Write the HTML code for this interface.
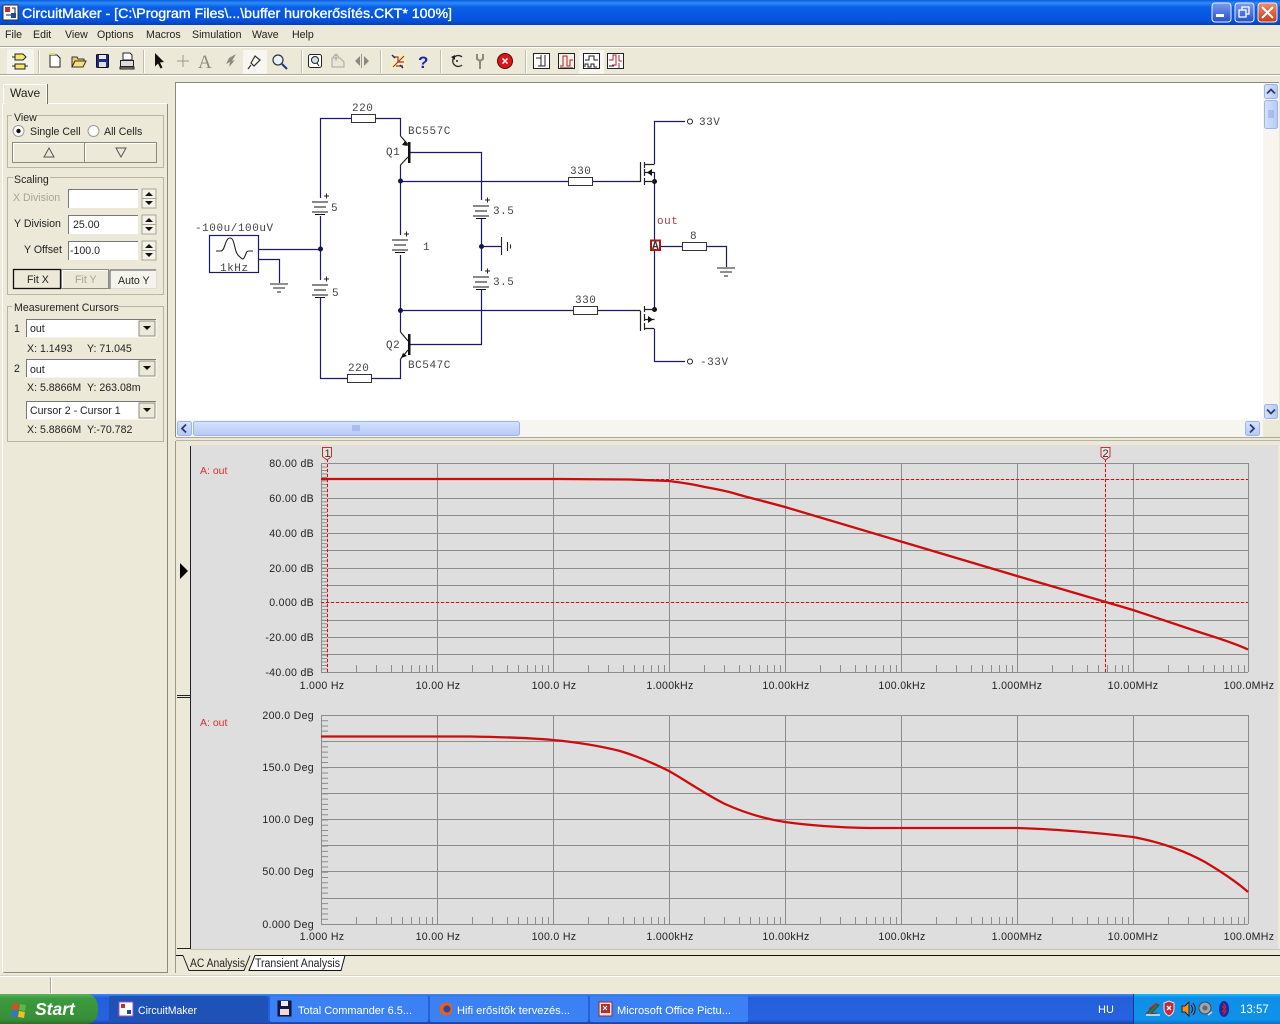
<!DOCTYPE html>
<html><head><meta charset="utf-8"><style>
html,body{margin:0;padding:0;background:#ece9d8;overflow:hidden}
svg{display:block;position:absolute;left:0;top:0}
text{font-family:"Liberation Sans",sans-serif;font-size:10.6px;fill:#222}
.m{font-family:"Liberation Mono",monospace;font-size:11px;fill:#444;letter-spacing:.55px}
.g{fill:#333;font-size:10px;letter-spacing:.3px}
.w{fill:none;stroke:#1a1a66;stroke-width:1.2}
.b{fill:none;stroke:#222;stroke-width:1.2}
.r{fill:#fff;stroke:#333;stroke-width:1}
.gr{stroke:#8c8c8c;stroke-width:1;fill:none}
</style></head><body>
<svg width="1280" height="1024" viewBox="0 0 1280 1024" xmlns="http://www.w3.org/2000/svg">
<defs>
<linearGradient id="tb" x1="0" y1="0" x2="0" y2="1"><stop offset="0" stop-color="#0a5be0"/><stop offset=".12" stop-color="#2f8bf5"/><stop offset=".28" stop-color="#0a60e8"/><stop offset=".8" stop-color="#0553dc"/><stop offset="1" stop-color="#0340b8"/></linearGradient>
<linearGradient id="bb" x1="0" y1="0" x2="0" y2="1"><stop offset="0" stop-color="#7a9cf0"/><stop offset="1" stop-color="#2850c8"/></linearGradient>
<linearGradient id="rb" x1="0" y1="0" x2="0" y2="1"><stop offset="0" stop-color="#e89070"/><stop offset="1" stop-color="#c83a18"/></linearGradient>
<linearGradient id="task" x1="0" y1="0" x2="0" y2="1"><stop offset="0" stop-color="#3f8cf3"/><stop offset=".12" stop-color="#245edb"/><stop offset=".85" stop-color="#2663e0"/><stop offset="1" stop-color="#1941a5"/></linearGradient>
<linearGradient id="tray" x1="0" y1="0" x2="0" y2="1"><stop offset="0" stop-color="#18bbff"/><stop offset=".12" stop-color="#0f8fe8"/><stop offset=".85" stop-color="#0f91ea"/><stop offset="1" stop-color="#0b6fc8"/></linearGradient>
<linearGradient id="st" x1="0" y1="0" x2="0" y2="1"><stop offset="0" stop-color="#5db35d"/><stop offset=".15" stop-color="#3c9a3c"/><stop offset=".85" stop-color="#388e38"/><stop offset="1" stop-color="#2a6f2a"/></linearGradient>
<linearGradient id="sb" x1="0" y1="0" x2="1" y2="0"><stop offset="0" stop-color="#d6e2fc"/><stop offset="1" stop-color="#b6c9f6"/></linearGradient>
<linearGradient id="sbh" x1="0" y1="0" x2="0" y2="1"><stop offset="0" stop-color="#d6e2fc"/><stop offset="1" stop-color="#b6c9f6"/></linearGradient>
<path id="tk" d="M35.500 672v-7M55.500 672v-7M70.500 672v-7M81.500 672v-7M90.500 672v-7M98.500 672v-7M105.500 672v-7M111.500 672v-7" stroke="#8c8c8c" fill="none"/>
<g id="bat"><path d="M-8 0h16M-6 5h12M-8 10h16M-5 12.500h10" stroke="#111" fill="none" stroke-width="1.100"/><path d="M4 -6h5M6.500 -8.500v5" stroke="#222" fill="none"/></g>
<path id="gnd" d="M-9 0h18M-6 4h12M-2 8h4" stroke="#222" fill="none" stroke-width="1.100"/>
</defs>

<rect width="1280" height="1024" fill="#ece9d8"/>

<!-- title -->
<rect width="1280" height="25" fill="url(#tb)"/>
<rect x="3" y="5" width="15" height="15" fill="#fff" stroke="#333"/>
<rect x="5" y="7" width="5" height="5" fill="#c03030"/><rect x="11" y="13" width="5" height="5" fill="#1a4aa0"/><path d="M6 15h5M12 8h3v5" stroke="#222" fill="none"/>
<text x="22" y="18" style="font-size:13.500px;fill:#fff;stroke:#fff;stroke-width:.35" textLength="430" lengthAdjust="spacingAndGlyphs">CircuitMaker - [C:\Program Files\...\buffer hurokerősítés.CKT* 100%]</text>
<rect x="1212" y="3" width="19" height="19" rx="3" fill="url(#bb)" stroke="#e8eeff"/><rect x="1216" y="14" width="8" height="3" fill="#fff"/>
<rect x="1235" y="3" width="19" height="19" rx="3" fill="url(#bb)" stroke="#e8eeff"/><path d="M1239 10h7v7h-7zM1242 10v-3h7v7h-3" fill="none" stroke="#fff" stroke-width="1.300"/>
<rect x="1258" y="3" width="19" height="19" rx="3" fill="url(#rb)" stroke="#f4e8e0"/><path d="M1262 7l11 11M1273 7l-11 11" stroke="#fff" stroke-width="2"/>

<!-- menu -->
<g>
<text x="5" y="38">File</text><text x="33" y="38">Edit</text><text x="65" y="38">View</text><text x="97" y="38">Options</text><text x="146" y="38">Macros</text><text x="192" y="38">Simulation</text><text x="252" y="38">Wave</text><text x="292" y="38">Help</text>
</g>
<path d="M0 46.500h1280" stroke="#aca899"/><path d="M0 47.500h1280" stroke="#fff"/>
<path d="M0 74.500h1280" stroke="#aca899"/><path d="M0 75.500h1280" stroke="#fff"/>

<!-- toolbar -->
<rect x="7" y="49" width="27" height="25" fill="#f5f4ec"/>
<path d="M15 54h8l3 3-3 3h-8zM15 64h10v5H15z" fill="#f6e96a" stroke="#222"/><path d="M12 57h3M12 66h3M25 66h3" stroke="#222"/>
<path d="M38.500 50v23M143.500 50v23M301.500 50v23M380.500 50v23M440.500 50v23M525.500 50v23" stroke="#c0bdaa" fill="none"/>
<path d="M39.500 50v23M144.500 50v23M302.500 50v23M381.500 50v23M441.500 50v23M526.500 50v23" stroke="#fff" fill="none"/>
<path d="M50 55h7l3 3v9H50z" fill="#fff" stroke="#222"/><path d="M50 54h5" stroke="#e8d850" stroke-width="2"/>
<path d="M72 57h5l1 2h6v2h-9l-3 6z" fill="#f0d060" stroke="#333"/><path d="M75 61h11l-3 6H72z" fill="#f8e080" stroke="#333"/>
<rect x="96.500" y="54.500" width="12" height="13" rx="1" fill="#1c2e8c" stroke="#111"/><rect x="99" y="55" width="7" height="4" fill="#e8e8f0"/><rect x="99" y="62" width="7" height="5" fill="#dfdfdf"/>
<path d="M123 53h7l2 2v5h-9z" fill="#fff" stroke="#222"/><rect x="120.500" y="60.500" width="13" height="6" fill="#ddd" stroke="#222"/><path d="M120 67h14v2h-14z" fill="#999" stroke="#222"/>
<path d="M155 53l9 9-4 .5 2.500 5-2 1-2.500-5-3 3z" fill="#111"/>
<path d="M183 55v12M177 61h12" stroke="#aaa89a" stroke-width="1.200"/>
<text x="198" y="68" style="font-family:'Liberation Serif',serif;font-size:19px;fill:#8c8a7c">A</text>
<path d="M236 54l-7 4-3 6 4-2-1 5 6-7-3 1z" fill="#8c8a7c"/>
<rect x="243" y="50" width="24" height="24" fill="#f7f6f0"/>
<path d="M255 56l5 4-6 6-3-3zM251 65l-3 4" fill="none" stroke="#333" stroke-width="1.200"/>
<circle cx="278" cy="60" r="5" fill="#e8f0f8" stroke="#333" stroke-width="1.200"/><path d="M282 64l5 5" stroke="#1c3a8c" stroke-width="2"/>
<rect x="308.500" y="54.500" width="13" height="13" rx="2" fill="#fff" stroke="#222"/><circle cx="315" cy="60" r="3.500" fill="#cfe0e8" stroke="#222"/><path d="M317 63l2 3" stroke="#222"/>
<path d="M332 58h8l4 4v5h-12z" fill="#e8e6d8" stroke="#aaa89a"/><path d="M336 54v7M333 57l3-3 3 3" fill="none" stroke="#aaa89a"/>
<path d="M361.500 54v14" stroke="#999"/><path d="M360 56l-5 5 5 5zM364 56l5 5-5 5z" fill="#8c8a7c"/>
<rect x="391" y="54" width="15" height="15" fill="#f4efc0"/><path d="M393 67l11-11M393 57h5v5h6M396 66h7" stroke="#b03030" fill="none" stroke-width="1.200"/><path d="M392 55l3 3M403 68l-3-3" stroke="#1a2a8c" stroke-width="1.500"/>
<text x="418" y="68" style="font-size:17px;font-weight:bold;fill:#1c2ab0">?</text>
<path d="M462 57a5.500 5.500 0 1 0 0 8" fill="none" stroke="#222" stroke-width="1.200"/><path d="M451 57l4-2v5z" fill="#222"/><circle cx="457" cy="61" r="1" fill="#222"/>
<path d="M477 54v5l3 2 3-2v-5M480 61v8" stroke="#8c8a7c" stroke-width="2" fill="none"/>
<circle cx="505" cy="61" r="7.500" fill="#d81818" stroke="#600"/><path d="M502.500 58.500l5 5M507.500 58.500l-5 5" stroke="#fff" stroke-width="1.500"/>
<g fill="none" stroke="#222">
<rect x="533.500" y="53.500" width="16" height="15" fill="#fff"/><path d="M536 58h5v-3M541 58v8M545 55v11h-7"/>
<rect x="558.500" y="53.500" width="16" height="15" fill="#f4f2e8"/><path d="M560 66h3v-10h4v10h3v-6h3" stroke="#b82020"/><path d="M560 68h13"/>
<rect x="579" y="50" width="25" height="24" fill="#f7f6f0" stroke="none"/>
<rect x="583.500" y="53.500" width="16" height="15" fill="#fff"/><path d="M585 60h4v-4h5v4h4M585 67v-3h3v3h3v-3h3v3h3"/>
<rect x="607.500" y="53.500" width="16" height="15" fill="#fff"/><path d="M609 60h4v-5h3v10h-4M619 55v6h3M619 63v5" stroke="#b82020"/><path d="M609 66h5"/>
</g>

<!-- left panel -->
<path d="M167.500 104V972.500H3.500" stroke="#8c8a78" fill="none"/>
<path d="M2.500 972V103.500H5" stroke="#fff" fill="none"/>
<path d="M47.500 103.500H167" stroke="#fff"/><path d="M3.500 103V84.500H46.500V103" fill="none" stroke="#fff"/><path d="M47.500 84v20" stroke="#716f64"/>
<text x="10" y="97" style="font-size:12px">Wave</text>

<g fill="none">
<path d="M12 115.500H7.500V167.500H163.500V115.500H37" stroke="#b8b5a4"/>
<path d="M13 177.500H7.500V294.500H163.500V177.500H50" stroke="#b8b5a4"/>
<path d="M12 306.500H7.500V441.500H163.500V306.500H118" stroke="#b8b5a4"/>
</g>
<text x="14" y="121">View</text>
<circle cx="18.500" cy="131" r="5.500" fill="#fff" stroke="#999"/><circle cx="18.500" cy="131" r="2.200" fill="#111"/>
<text x="30" y="135">Single Cell</text>
<circle cx="93.500" cy="131" r="5.500" fill="#fff" stroke="#999"/>
<text x="104" y="135">All Cells</text>
<g>
<rect x="12.500" y="142.500" width="72" height="20" fill="#ece9d8" stroke="#8c8a78"/><path d="M13 143.500h71M13.500 144v18" stroke="#fff" fill="none"/>
<rect x="84.500" y="142.500" width="72" height="20" fill="#ece9d8" stroke="#8c8a78"/><path d="M85 143.500h71M85.500 144v18" stroke="#fff" fill="none"/>
<path d="M44 157l5-9 5 9z" fill="none" stroke="#555"/><path d="M116 148l5 9 5-9z" fill="none" stroke="#555"/>
</g>
<text x="14" y="183">Scaling</text>
<text x="13" y="201" style="fill:#a7a594">X Division</text>
<text x="14" y="227">Y Division</text>
<text x="24" y="253">Y Offset</text>
<g fill="#fff">
<rect x="68" y="189" width="70" height="19"/><rect x="68" y="215" width="70" height="19"/><rect x="68" y="241" width="70" height="19"/>
<path d="M68.500 208V189.500H138M68.500 234V215.500H138M68.500 260V241.500H138" fill="none" stroke="#777"/>
</g>
<text x="73" y="228">25.00</text><text x="70" y="254">-100.0</text>
<g>
<rect x="142" y="189" width="14" height="19" fill="#f4f2e8" stroke="#a8a594"/><rect x="142" y="215" width="14" height="19" fill="#f4f2e8" stroke="#a8a594"/><rect x="142" y="241" width="14" height="19" fill="#f4f2e8" stroke="#a8a594"/>
<path d="M145 196l4-4 4 4zM145 201l4 4 4-4zM145 222l4-4 4 4zM145 227l4 4 4-4zM145 248l4-4 4 4zM145 253l4 4 4-4z" fill="#111"/>
<path d="M142 198.500h14M142 224.500h14M142 250.500h14" stroke="#a8a594"/>
</g>
<rect x="13.500" y="269.500" width="47" height="19" fill="#ece9d8" stroke="#111" stroke-width="1.300"/>
<rect x="61.500" y="269.500" width="47" height="19" fill="#ece9d8" stroke="#8c8a78"/><path d="M62 270.500h46M62.500 271v17" stroke="#fff" fill="none"/>
<rect x="109.500" y="269.500" width="47" height="19" fill="#f5f4ec" stroke="#ddd"/><path d="M110 270h46M110 270v19" stroke="#555" fill="none"/>
<text x="27" y="283">Fit X</text><text x="75" y="283" style="fill:#a7a594">Fit Y</text><text x="118" y="284">Auto Y</text>

<text x="14" y="311">Measurement Cursors</text>
<text x="14" y="332">1</text><text x="14" y="372">2</text>
<g>
<rect x="26.500" y="319.500" width="130" height="18" fill="#fff"/><path d="M26.500 337V319.500H156" stroke="#777" fill="none"/>
<rect x="26.500" y="359.500" width="130" height="18" fill="#fff"/><path d="M26.500 377V359.500H156" stroke="#777" fill="none"/>
<rect x="26.500" y="401.500" width="130" height="18" fill="#fff"/><path d="M26.500 419V401.500H156" stroke="#777" fill="none"/>
<rect x="139" y="321" width="16" height="15" fill="#ece9d8" stroke="#8c8a78"/><rect x="139" y="361" width="16" height="15" fill="#ece9d8" stroke="#8c8a78"/><rect x="139" y="403" width="16" height="15" fill="#ece9d8" stroke="#8c8a78"/>
<path d="M143 326h8l-4 4zM143 366h8l-4 4zM143 408h8l-4 4z" fill="#111"/>
</g>
<text x="30" y="332">out</text><text x="30" y="373">out</text><text x="30" y="414">Cursor 2 - Cursor 1</text>
<text x="27" y="352">X: 1.1493</text><text x="87" y="352">Y: 71.045</text>
<text x="27" y="391">X: 5.8866M</text><text x="87" y="391">Y: 263.08m</text>
<text x="27" y="433">X: 5.8866M</text><text x="87" y="433">Y:-70.782</text>

<!-- schematic canvas -->
<path d="M175.500 437V82.500H1279" stroke="#8c8a78" fill="none"/>
<rect x="176" y="83" width="1087" height="337" fill="#fff"/>
<rect x="1263" y="83" width="16" height="337" fill="#f6f5ef"/>
<rect x="176" y="420" width="1087" height="17" fill="#f6f5ef"/>
<path d="M176 437.500H1280" stroke="#aca899"/><path d="M176 440.500H1280" stroke="#b8b5a4"/>
<rect x="1264.500" y="84.500" width="13" height="14" rx="2" fill="url(#sb)" stroke="#9db4ea"/><path d="M1267 93.500l4-4 4 4" fill="none" stroke="#2a3a78" stroke-width="1.800"/>
<rect x="1264.500" y="100.500" width="13" height="28" rx="2" fill="url(#sb)" stroke="#9db4ea"/><path d="M1268 111h6M1268 113h6M1268 115h6M1268 117h6" stroke="#8ea4dc"/>
<rect x="1264.500" y="404.500" width="13" height="14" rx="2" fill="url(#sb)" stroke="#9db4ea"/><path d="M1267 409.500l4 4 4-4" fill="none" stroke="#2a3a78" stroke-width="1.800"/>
<rect x="177.500" y="421.500" width="14" height="14" rx="2" fill="url(#sbh)" stroke="#9db4ea"/><path d="M186 424.500l-4 4 4 4" fill="none" stroke="#2a3a78" stroke-width="1.800"/>
<rect x="193.500" y="421.500" width="326" height="14" rx="2" fill="url(#sbh)" stroke="#9db4ea"/><path d="M353 425v6M355 425v6M357 425v6M359 425v6" stroke="#8ea4dc"/>
<rect x="1245.500" y="421.500" width="14" height="14" rx="2" fill="url(#sbh)" stroke="#9db4ea"/><path d="M1250 424.500l4 4-4 4" fill="none" stroke="#2a3a78" stroke-width="1.800"/>

<!-- wires -->
<g class="w">
<path d="M351 118.500H320.500V198M320.500 216V280M320.500 298V378.500H347M372 378.500H400.500V359"/>
<path d="M376 118.500H400.500V136"/>
<path d="M400.500 165V235M400.500 255V332"/>
<path d="M410 152.500H481.500V200M481.500 219V271M481.500 290V344.500H410"/>
<path d="M400.500 181.500H568M593 181.500H631M400.500 310.500H573M598 310.500H631"/>
<path d="M654.500 164V121.500H685M654.500 172V308M654.500 329V361.500H685"/>
<path d="M661 246.500H682M707 246.500H726.500V267"/>
<path d="M259 249.500H320.500M259 259.500H279.500V283M481.500 246.500H501"/>
</g>
<g fill="#14144e">
<circle cx="320.500" cy="249" r="2.500"/><circle cx="400.500" cy="181" r="2.500"/><circle cx="400.500" cy="310.500" r="2.500"/><circle cx="481.500" cy="246.500" r="2.500"/>
</g>
<circle cx="654.500" cy="181.500" r="2.500" fill="#111"/><circle cx="654.500" cy="309.500" r="2.500" fill="#111"/>

<!-- resistors -->
<rect class="r" x="351.500" y="114.500" width="24" height="8"/>
<rect class="r" x="347.500" y="374.500" width="24" height="8"/>
<rect class="r" x="568.500" y="177.500" width="24" height="8"/>
<rect class="r" x="573.500" y="306.500" width="24" height="8"/>
<rect class="r" x="682.500" y="242.500" width="24" height="8"/>

<use href="#bat" x="320" y="202"/><use href="#bat" x="320" y="285"/><use href="#bat" x="400" y="240"/><use href="#bat" x="481" y="206"/><use href="#bat" x="481" y="277"/>

<use href="#gnd" x="279" y="284"/><use href="#gnd" x="726" y="268"/>
<path d="M501.500 237v18M507.500 242v9M510.500 244.500v4" stroke="#222" fill="none" stroke-width="1.100"/>

<!-- transistors -->
<rect x="408" y="142" width="2.500" height="21" fill="#111"/>
<rect x="408" y="334" width="2.500" height="21" fill="#111"/>
<path d="M400.500 136l8 9M408 157l-7.500 8M408 341l-7.500-9M408 350l-7.500 9" class="b"/>
<path d="M408 146l-6-1 3-4zM401 358l2-5 4 3z" fill="#111"/>

<!-- mosfets -->
<g class="b">
<path d="M631 181.500H640.500M640.500 162v20M644.500 162v6M644.500 169v7M644.500 178v7M645 164.500H654.500M645 172.500H654.500M645 181.500H654.500"/>
<path d="M631 310.500H640.500M640.500 311v20M644.500 306v6M644.500 314v7M644.500 323v7M645 309.500H654.500M645 319.500H654.500M645 328.500H654.500"/>
</g>
<path d="M647 172.500l5-3.500v7zM653 319.500l-5-3.500v7z" fill="#111"/>
<circle cx="690" cy="121.500" r="2.500" fill="#fff" stroke="#222"/><circle cx="690" cy="361.500" r="2.500" fill="#fff" stroke="#222"/>

<!-- source -->
<rect x="209.500" y="235.500" width="49" height="37" fill="#fff" stroke="#1a1a66" stroke-width="1.200"/>
<path d="M216 251h5c4 0 4-13 9-13s4 13 8 17 5 6 7 1 2-5 4-5h4" fill="none" stroke="#222" stroke-width="1.100"/>

<!-- probe -->
<rect x="651" y="240.500" width="9" height="9.500" fill="#fff" stroke="#b01818" stroke-width="2"/>
<text x="652" y="249" style="font-family:'Liberation Mono',monospace;font-size:11px;font-weight:bold;fill:#333">A</text>

<!-- schematic labels -->
<text class="m" x="352" y="111">220</text>
<text class="m" x="408" y="134">BC557C</text>
<text class="m" x="386" y="155">Q1</text>
<text class="m" x="386" y="348">Q2</text>
<text class="m" x="408" y="368">BC547C</text>
<text class="m" x="348" y="371">220</text>
<text class="m" x="331" y="211">5</text>
<text class="m" x="332" y="296">5</text>
<text class="m" x="423" y="250">1</text>
<text class="m" x="195" y="231">-100u/100uV</text>
<text class="m" x="220" y="271">1kHz</text>
<text class="m" x="493" y="214">3.5</text>
<text class="m" x="493" y="285">3.5</text>
<text class="m" x="570" y="174">330</text>
<text class="m" x="575" y="303">330</text>
<text class="m" x="699" y="125">33V</text>
<text class="m" x="700" y="365">-33V</text>
<text class="m" x="657" y="224" style="fill:#a04040">out</text>
<text class="m" x="690" y="239">8</text>

<!-- wave area -->
<path d="M175.500 441V973" stroke="#9c9a8a"/>
<rect x="178" y="445" width="1100" height="504" fill="#dedede"/>
<rect x="178" y="445" width="12" height="504" fill="#ece9d8"/>
<path d="M190.500 446V948.500H177M177 695.500h14M177 697.500h14" stroke="#222" fill="none"/>
<path d="M180 563v16l8-8z" fill="#000"/>
<path d="M190 949.500H1280" stroke="#c8c5b4"/>

<!-- grid top -->
<g class="gr">
<path d="M321 463.500H1248M321 479.500H1248M321 498.500H1248M321 515.500H1248M321 533.500H1248M321 550.500H1248M321 568.500H1248M321 585.500H1248M321 620.500H1248M321 637.500H1248M321 654.500H1248M321 672.500H1248"/>
<path d="M321.500 463V672M437.500 463V672M553.500 463V672M669.500 463V672M785.500 463V672M901.500 463V672M1017.500 463V672M1133.500 463V672M1248.500 463V672"/>
<path d="M324.500 463V672" stroke-width="7" stroke-dasharray="1 2.483"/>
</g>
<use href="#tk" x="321"/><use href="#tk" x="437"/><use href="#tk" x="553"/><use href="#tk" x="669"/><use href="#tk" x="785"/><use href="#tk" x="901"/><use href="#tk" x="1017"/><use href="#tk" x="1133"/>

<!-- grid bottom -->
<g class="gr">
<path d="M321 715.500H1248M321 741.500H1248M321 767.500H1248M321 793.500H1248M321 819.500H1248M321 845.500H1248M321 871.500H1248M321 898.500H1248M321 924.500H1248"/>
<path d="M321.500 715V924M437.500 715V924M553.500 715V924M669.500 715V924M785.500 715V924M901.500 715V924M1017.500 715V924M1133.500 715V924M1248.500 715V924"/>
<path d="M324.500 715V924" stroke-width="7" stroke-dasharray="1 4.225"/>
</g>
<use href="#tk" x="321" y="252"/><use href="#tk" x="437" y="252"/><use href="#tk" x="553" y="252"/><use href="#tk" x="669" y="252"/><use href="#tk" x="785" y="252"/><use href="#tk" x="901" y="252"/><use href="#tk" x="1017" y="252"/><use href="#tk" x="1133" y="252"/>

<!-- cursors -->
<path d="M327.500 459V672M1105.500 459V672M321 479.500H1248M321 602.500H1248" fill="none" stroke="#eab4b4"/>
<path d="M327.500 459V672M1105.500 459V672M321 479.500H1248M321 602.500H1248" fill="none" stroke="#d01010" stroke-dasharray="3 2"/>
<path d="M322.500 447.500h9v9l-4.500 3.500-4.500-3.500z" fill="#e8e4e0" stroke="#c03030"/>
<path d="M1101 447.500h9v9l-4.500 3.500-4.500-3.500z" fill="#e8e4e0" stroke="#c03030"/>
<text x="324.500" y="457" style="font-size:11px;fill:#333">1</text>
<text x="1102.500" y="457" style="font-size:11px;fill:#333">2</text>

<!-- curves -->
<path d="M321 479H560L630 479.500 669 481C680 482.500 690 483.500 700 486 712 488.500 722 490 733 493 750 498 765 501.500 785 507L901 541.500 1017 576 1133 610 1190 629C1210 636 1230 641 1248 649.500" fill="none" stroke="#cc0d0d" stroke-width="2.300"/>
<path d="M321 736.500H470C500 737 530 738 553 740 580 742.500 600 746 620 751 640 757 655 764 669 771 685 780 705 794 725 804 745 813 765 819 785 822 810 825.500 840 827.500 870 828L1017 828C1050 829 1090 832 1133 837 1160 842 1185 851 1205 862 1225 874 1238 883 1248 892" fill="none" stroke="#cc0d0d" stroke-width="2.300"/>

<text x="200" y="474" style="font-size:10.500px;fill:#d83030">A: out</text>
<text x="200" y="726" style="font-size:10.500px;fill:#d83030">A: out</text>

<!-- y labels -->
<g class="g" text-anchor="end">
<text x="314" y="467">80.00 dB</text><text x="314" y="502">60.00 dB</text><text x="314" y="537">40.00 dB</text><text x="314" y="572">20.00 dB</text><text x="314" y="606">0.000 dB</text><text x="314" y="641">-20.00 dB</text><text x="314" y="676">-40.00 dB</text>
<text x="314" y="719">200.0 Deg</text><text x="314" y="771">150.0 Deg</text><text x="314" y="823">100.0 Deg</text><text x="314" y="875">50.00 Deg</text><text x="314" y="928">0.000 Deg</text>
</g>
<g class="g" text-anchor="middle">
<text x="322" y="689">1.000 Hz</text><text x="438" y="689">10.00 Hz</text><text x="554" y="689">100.0 Hz</text><text x="670" y="689">1.000kHz</text><text x="786" y="689">10.00kHz</text><text x="902" y="689">100.0kHz</text><text x="1017" y="689">1.000MHz</text><text x="1133" y="689">10.00MHz</text><text x="1249" y="689">100.0MHz</text>
<text x="322" y="940">1.000 Hz</text><text x="438" y="940">10.00 Hz</text><text x="554" y="940">100.0 Hz</text><text x="670" y="940">1.000kHz</text><text x="786" y="940">10.00kHz</text><text x="902" y="940">100.0kHz</text><text x="1017" y="940">1.000MHz</text><text x="1133" y="940">10.00MHz</text><text x="1249" y="940">100.0MHz</text>
</g>

<!-- bottom tabs -->
<path d="M176 955.500H183" stroke="#111"/>
<path d="M255 955.500H1280" stroke="#111"/>
<path d="M183 955.500l6 15h55l6-15" fill="#ece9d8" stroke="#222"/>
<path d="M255 955.500h90l-4 15h-92z" fill="#fff" stroke="#111"/>
<text x="190" y="967" style="font-size:11.500px" textLength="55" lengthAdjust="spacingAndGlyphs">AC Analysis</text>
<text x="255" y="967" style="font-size:11.500px" textLength="85" lengthAdjust="spacingAndGlyphs">Transient Analysis</text>

<!-- status bar -->
<path d="M0 975.500H1280" stroke="#d8d5c4"/><path d="M0 976.500H1280" stroke="#fff"/>
<path d="M50.500 977v16" stroke="#aca899"/><path d="M51.500 977v16" stroke="#fff"/>

<!-- taskbar -->
<rect y="994" width="1280" height="30" fill="url(#task)"/>
<path d="M0 1024V994H88Q98 996 98 1009T88 1024Z" fill="url(#st)"/>
<path d="M13 1003l6 1-1 6-6-1z" fill="#e04828"/><path d="M20 1004l6 1-1 6-6-1z" fill="#60b840"/><path d="M12 1010l6 1-1 6-6-1z" fill="#3870d8"/><path d="M19 1011l6 1-1 6-6-1z" fill="#f0c020"/>
<text x="35" y="1015" style="font-size:17.500px;font-style:italic;font-weight:bold;fill:#fff">Start</text>
<rect x="109" y="996" width="159" height="26" rx="2" fill="#1e52b7"/>
<rect x="270" y="996" width="158" height="26" rx="2" fill="#3c81f3"/>
<rect x="430" y="996" width="158" height="26" rx="2" fill="#3c81f3"/>
<rect x="590" y="996" width="158" height="26" rx="2" fill="#3c81f3"/>
<rect x="119" y="1002" width="14" height="14" fill="#fff" stroke="#a050c0"/><rect x="121" y="1004" width="4" height="4" fill="#c03030"/><rect x="127" y="1010" width="4" height="4" fill="#1a4aa0"/>
<text x="138" y="1014" style="fill:#fff;font-size:11px" textLength="59" lengthAdjust="spacingAndGlyphs">CircuitMaker</text>
<rect x="278" y="1001" width="13" height="15" fill="#181848" stroke="#101030"/><rect x="281" y="1001" width="7" height="5" fill="#eee"/><rect x="280" y="1009" width="9" height="6" fill="#f0d8d8"/>
<text x="298" y="1014" style="fill:#fff;font-size:11px" textLength="114" lengthAdjust="spacingAndGlyphs">Total Commander 6.5...</text>
<circle cx="446" cy="1009" r="6.500" fill="#e86018"/><circle cx="447" cy="1009" r="3.500" fill="#2848a8"/>
<text x="457" y="1014" style="fill:#fff;font-size:11px" textLength="113" lengthAdjust="spacingAndGlyphs">Hifi erősítők tervezés...</text>
<rect x="599" y="1002" width="13" height="14" fill="#e8e0e0" stroke="#a02828"/><rect x="601" y="1004" width="9" height="9" fill="#b03030"/><path d="M603 1006l4 4M607 1006l-4 4" stroke="#fff"/>
<text x="617" y="1014" style="fill:#fff;font-size:11px" textLength="114" lengthAdjust="spacingAndGlyphs">Microsoft Office Pictu...</text>
<text x="1098" y="1013" style="fill:#fff;font-size:11px">HU</text>
<rect x="1134" y="994" width="146" height="30" fill="url(#tray)"/><path d="M1133.500 994v30" stroke="#0a3a90"/>
<path d="M1146 1014l10-10 3 1-8 9 6-1" fill="#2a7a3a" stroke="#444"/><path d="M1149 1009l8-6" stroke="#c02828" stroke-width="1.500"/><path d="M1146 1015h14" stroke="#e8e8e8" stroke-width="1.500"/>
<path d="M1164 1003l5-2 5 2v6c0 4-3 6-5 7-2-1-5-3-5-7z" fill="#c82838" stroke="#e8e0e8"/><path d="M1167 1006l4 4M1171 1006l-4 4" stroke="#fff" stroke-width="1.300"/>
<path d="M1182 1006h3l4-4v14l-4-4h-3z" fill="#f09020" stroke="#222"/><path d="M1191 1005c2 3 2 6 0 8M1193 1003c3 4 3 8 0 12" stroke="#111" fill="none"/>
<circle cx="1205" cy="1008" r="6" fill="#9aa4b0" stroke="#444"/><circle cx="1205" cy="1008" r="2.500" fill="#606870"/><path d="M1208 1015l4-3" stroke="#c8d8f0" stroke-width="1.500"/>
<ellipse cx="1224" cy="1009" rx="5" ry="8" fill="#1828a0"/><path d="M1222 1006l4 5-2 3v-10l2 3-4 5" stroke="#e02020" fill="none"/>
<text x="1240" y="1013" style="fill:#fff;font-size:11.500px">13:57</text>
</svg>
</body></html>
